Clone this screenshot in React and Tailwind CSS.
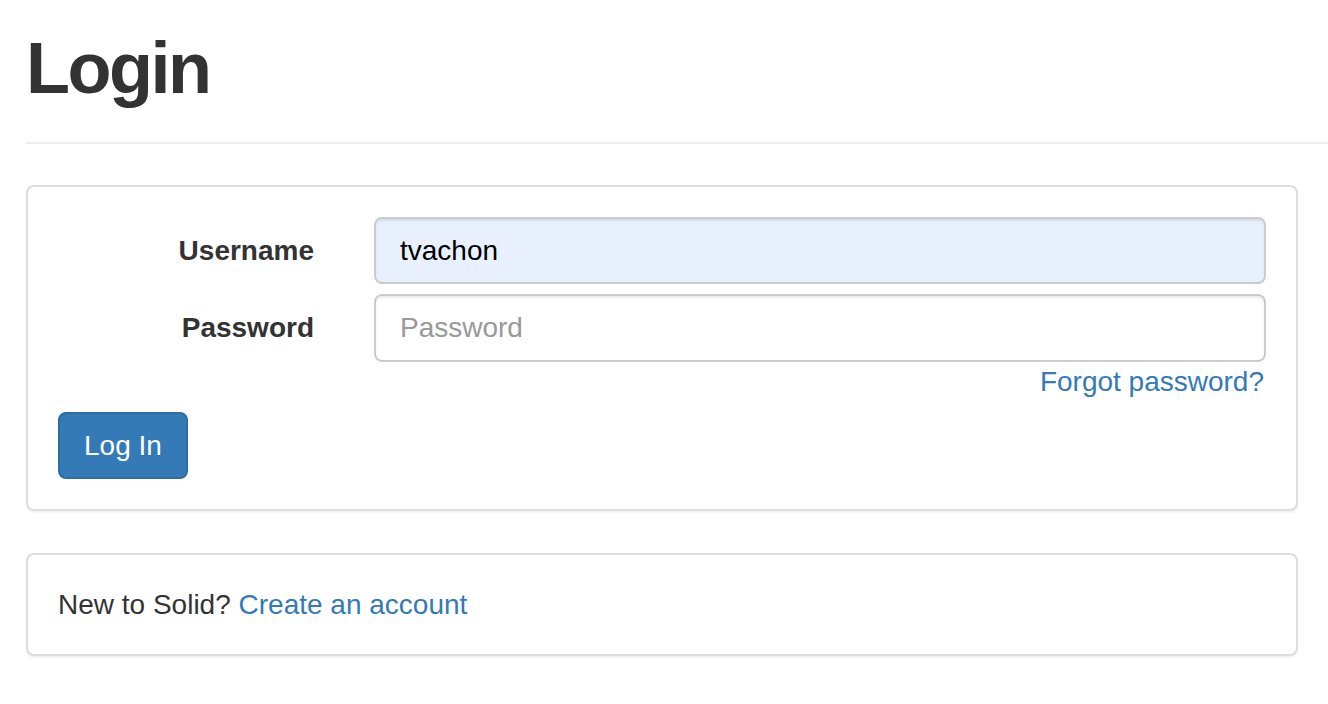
import React from "react";

const App = () => {
  return (
    <div className="min-h-screen bg-white pl-[26px] font-['Liberation_Sans',Arial,sans-serif] text-[#333]">
      {/* Page header */}
      <h1 className="pt-[32px] text-[72px] font-bold leading-none tracking-[-2.5px] text-[#333]">
        Login
      </h1>
      <hr className="mt-[38px] border-0 border-t-2 border-[#eee]" />

      {/* Login panel */}
      <div className="mr-[30px] mt-[41px] rounded-[8px] border-2 border-[#ddd] bg-white p-[30px] shadow-[0_2px_2px_rgba(0,0,0,0.05)]">
        <div className="flex items-center">
          <label className="w-[256px] shrink-0 text-right text-[28px] font-bold">Username</label>
          <input
            readOnly
            value="tvachon"
            className="ml-[60px] h-[67px] flex-1 rounded-[8px] border-2 border-[#ccc] bg-[#e8f0fe] px-[24px] text-[28px] text-black shadow-[inset_0_2px_2px_rgba(0,0,0,0.075)] outline-none"
          />
        </div>
        <div className="mt-[10px] flex items-center">
          <label className="w-[256px] shrink-0 text-right text-[28px] font-bold">Password</label>
          <input
            type="password"
            placeholder="Password"
            className="ml-[60px] h-[68px] flex-1 rounded-[8px] border-2 border-[#ccc] bg-white px-[24px] text-[28px] text-black shadow-[inset_0_2px_2px_rgba(0,0,0,0.075)] outline-none placeholder:text-[#999]"
          />
        </div>
        <div className="text-right text-[28px] leading-[40px] pr-[2px]">
          <a href="#" className="text-[#337ab7]">Forgot password?</a>
        </div>
        <button className="mt-[10px] h-[67px] rounded-[8px] border-2 border-[#2e6da4] bg-[#337ab7] px-[24px] text-[28px] text-white">
          Log In
        </button>
      </div>

      {/* Register panel */}
      <div className="mr-[30px] mt-[42px] rounded-[8px] border-2 border-[#ddd] bg-white px-[30px] pt-[30px] pb-[29px] text-[28px] leading-[40px] shadow-[0_2px_2px_rgba(0,0,0,0.05)]">
        New to Solid? <a href="#" className="text-[#337ab7]">Create an account</a>
      </div>
    </div>
  );
};

export default App;
